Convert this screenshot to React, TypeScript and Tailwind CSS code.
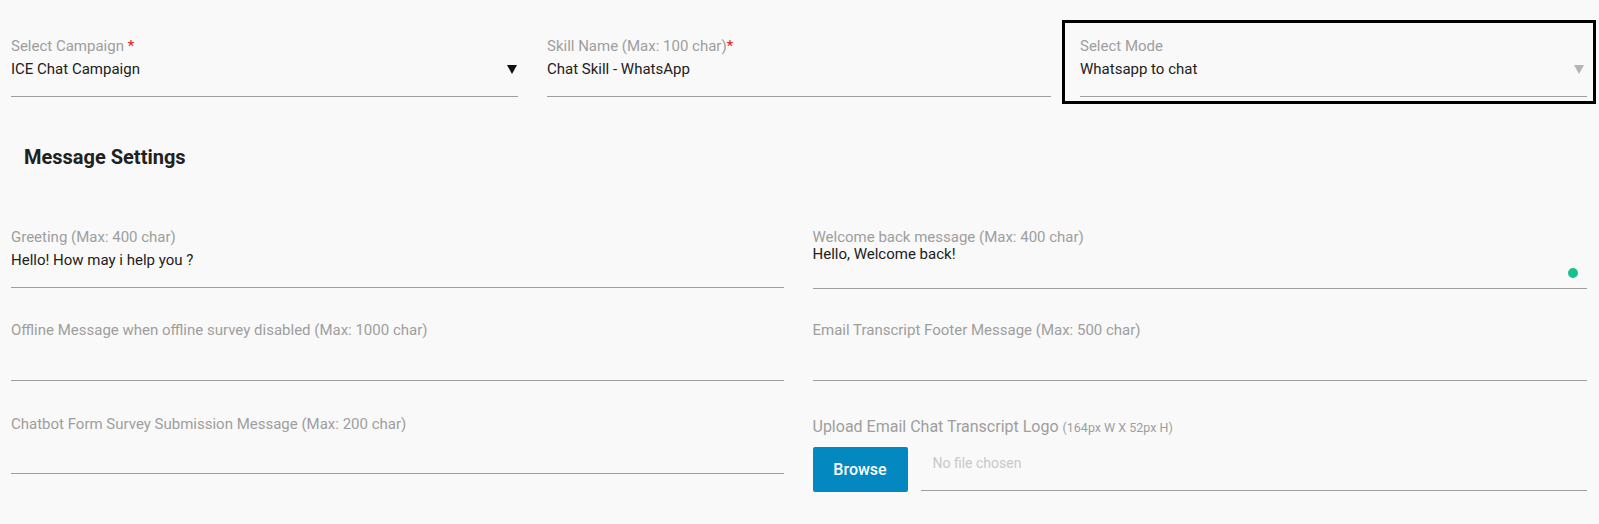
import React from 'react';

const font = { fontFamily: 'Roboto, "Liberation Sans", sans-serif' };

const Caret = ({ color }: { color: string }) => (
    <svg width="10" height="9" viewBox="0 0 10 9">
        <polygon points="0,0 10,0 5,9" fill={color} />
    </svg>
);

const Label = ({ text }: { text: string }) => (
    <div className="text-[15px] leading-[22px] text-[#9e9e9e]">{text}</div>
);

const TopField = ({ label, value, required, sep, caret }: { label: string; value: string; required?: boolean; sep?: boolean; caret?: string }) => (
    <div>
        <div className="text-[15px] leading-[20px] text-[#9e9e9e]">
            {label}
            {required && <span className="text-[#f01010]">{sep ? ' *' : '*'}</span>}
        </div>
        <div className="mt-[3px] flex items-center justify-between h-[20px]">
            <span className="text-[15px] leading-[20px] text-[#212121]">{value}</span>
            {caret && <span className={caret === 'black' ? 'mr-[1px]' : 'mr-[3px]'}><Caret color={caret === 'black' ? '#111' : '#b5b5b5'} /></span>}
        </div>
        <div className="mt-[17px] h-px bg-[#9e9e9e]" />
    </div>
);

const TextField = ({ label, value, gap }: { label: string; value?: string; gap: number }) => (
    <div>
        <Label text={label} />
        {value ? (
            <>
                <div className="mt-px text-[15px] leading-[22px] text-[#212121]">{value}</div>
                <div className="mt-[16px] h-px bg-[#9e9e9e]" />
            </>
        ) : (
            <div className={gap === 39 ? 'mt-[39px] h-px bg-[#9e9e9e]' : 'mt-[38px] h-px bg-[#9e9e9e]'} />
        )}
    </div>
);

export default function App() {
    return (
        <div className="min-h-screen w-full bg-[#f9f9f9]" style={font}>
            <div className="grid grid-cols-3 pt-[20px]">
                <div className="pl-[11px] pr-[15px] pt-[16px]">
                    <TopField label="Select Campaign" value="ICE Chat Campaign" required sep caret="black" />
                </div>
                <div className="pl-[14px] pr-[15px] pt-[16px]">
                    <TopField label="Skill Name (Max: 100 char)" value="Chat Skill - WhatsApp" required />
                </div>
                <div>
                    <div className="ml-[-4px] mr-[3px] border-[3px] border-black pl-[15px] pr-[6px] pt-[13px] pb-[4px]">
                        <TopField label="Select Mode" value="Whatsapp to chat" caret="grey" />
                    </div>
                </div>
            </div>

            <h2 className="mt-[40px] pl-[24px] text-[20px] leading-[26px] font-bold text-[#212121]">Message Settings</h2>

            <div className="mt-[56px] grid grid-cols-2 items-start">
                <div className="pl-[11px] pr-[16px]">
                    <TextField label="Greeting (Max: 400 char)" value="Hello! How may i help you ?" gap={0} />
                </div>
                <div className="pl-[13px] pr-[12px]">
                    <div className="text-[15px] leading-[16px] mt-[3px] text-[#9e9e9e]">Welcome back message (Max: 400 char)</div>
                    <div className="mt-px text-[15px] leading-[16px] text-[#212121]">Hello, Welcome back!</div>
                    <div className="flex justify-end mt-[6px] pr-[9px]">
                        <div className="h-[10px] w-[10px] rounded-full bg-[#18c08f]" />
                    </div>
                    <div className="mt-[10px] h-px bg-[#9e9e9e]" />
                </div>
            </div>

            <div className="mt-[30px] grid grid-cols-2 items-start">
                <div className="pl-[11px] pr-[16px]">
                    <TextField label="Offline Message when offline survey disabled (Max: 1000 char)" gap={39} />
                </div>
                <div className="pl-[13px] pr-[12px]">
                    <TextField label="Email Transcript Footer Message (Max: 500 char)" gap={39} />
                </div>
            </div>

            <div className="mt-[32px] grid grid-cols-2 items-start">
                <div className="pl-[11px] pr-[16px]">
                    <TextField label="Chatbot Form Survey Submission Message (Max: 200 char)" gap={38} />
                </div>
                <div className="pl-[13px] pr-[12px] pt-[3px]">
                    <div className="text-[16px] leading-[22px] text-[#9e9e9e]">
                        Upload Email Chat Transcript Logo <span className="text-[12.5px]">(164px W X 52px H)</span>
                    </div>
                    <div className="mt-[8px] flex items-start">
                        <button className="h-[45px] w-[95px] rounded-[2px] bg-[#0389c0] text-[16px] font-medium text-white">Browse</button>
                        <div className="ml-[13px] flex-1 h-[44px] pl-[12px] pt-[4px] border-b border-[#9e9e9e]">
                            <span className="text-[14px] leading-[20px] text-[#c8c8c8]">No file chosen</span>
                        </div>
                    </div>
                </div>
            </div>
        </div>
    );
}
